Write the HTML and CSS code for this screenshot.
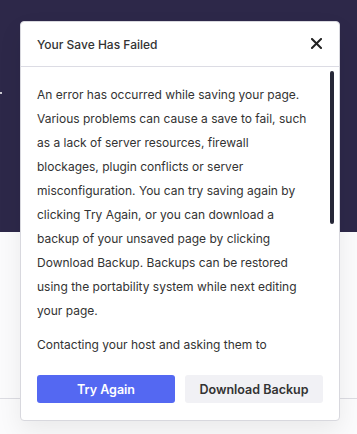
FILE: index.html
```html
<!DOCTYPE html>
<html lang="en">
<head>
    <meta charset="UTF-8">
    <title>Save Failed</title>
    <link rel="stylesheet" href="styles.css">
</head>
<body>
    <div class="editor">
        <div class="editor-top">
            <span class="dot"></span>
        </div>
        <div class="editor-bottom">
            <div class="rule"></div>
        </div>
    </div>
    <div class="modal" id="modal">
        <div class="modal-header">
            <h1>Your Save Has Failed</h1>
            <div class="closer" id="x">
                <svg width="11" height="11" viewBox="0 0 11 11">
                    <path d="M1 1 L10 10 M10 1 L1 10" stroke="#222" stroke-width="2" stroke-linecap="square"/>
                </svg>
            </div>
        </div>
        <div class="modal-body">
            <p>An error has occurred while saving your page. Various problems can cause a save to fail, such as a lack of server resources, firewall blockages, plugin conflicts or server misconfiguration. You can try saving again by clicking Try Again, or you can download a backup of your unsaved page by clicking Download Backup. Backups can be restored using the portability system while next editing your page.</p>
            <p>Contacting your host and asking them to</p>
            <div class="thumb"></div>
        </div>
        <div class="modal-buttons">
            <button class="btn primary">Try Again</button>
            <button class="btn secondary">Download Backup</button>
        </div>
    </div>
</body>
</html>
```

FILE: styles.css
```css
body {
    margin: 0;
    font-family: Inter, "Noto Sans", sans-serif;
    background: #fbfbfc;
}
.editor {
    height: 434px;
    display: flex;
    flex-direction: column;
}
.editor-top {
    height: 232px;
    background: #2d2849;
    position: relative;
}
.dot {
    position: absolute;
    left: 0;
    top: 92px;
    width: 2px;
    height: 2px;
    border-radius: 50%;
    background: #fff;
}
.editor-bottom {
    flex: 1;
    padding-top: 166px;
}
.rule {
    border-top: 1px solid #dcdce2;
}
.modal {
    position: absolute;
    left: 20px;
    top: 21px;
    width: 318px;
    height: 398px;
    background: white;
    border: 1px solid #d8d8de;
    border-radius: 4px;
    box-shadow: 0 10px 24px rgba(0, 0, 0, .07);
    display: flex;
    flex-direction: column;
    color: #333;
}
.modal-header {
    height: 44px;
    border-bottom: 1px solid #dcdce4;
    display: flex;
    align-items: center;
    justify-content: space-between;
    padding: 0 17px 0 16px;
}
.modal-header h1 {
    margin: 0;
    font-size: 12px;
    font-weight: 500;
    color: #333;
}
.closer {
    display: flex;
    width: 11px;
    height: 11px;
    margin-top: -2px;
    cursor: pointer;
}
.modal-body {
    height: 276px;
    overflow: hidden;
    padding: 16px 30px 0 16px;
    position: relative;
}
.modal-body p {
    margin: 0 0 10px;
    font-size: 12px;
    line-height: 24px;
}
.thumb {
    position: absolute;
    right: 5px;
    top: 4px;
    width: 4px;
    height: 153px;
    border-radius: 2px;
    background: #262737;
}
.modal-buttons {
    display: flex;
    gap: 10px;
    padding: 16px 16px 0 16px;
}
.btn {
    flex: 1;
    height: 28px;
    border: none;
    border-radius: 3px;
    font-family: Inter, "Noto Sans", sans-serif;
    font-size: 12.5px;
    font-weight: 600;
    cursor: pointer;
}
.btn.primary {
    background: #5468f2;
    color: white;
}
.btn.secondary {
    background: #f1f1f5;
    color: #333;
}
```
